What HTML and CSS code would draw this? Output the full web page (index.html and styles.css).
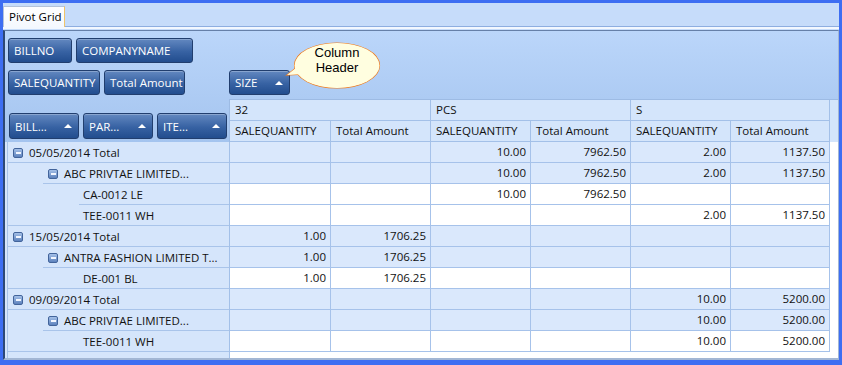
FILE: index.html
```html
<!DOCTYPE html>
<html lang="en">
<head>
  <meta charset="UTF-8">
  <title>Pivot Grid</title>
  <link rel="stylesheet" href="styles.css">
</head>
<body>
  <div class="window">
    <div class="tabstrip">
      <div class="tab">Pivot Grid</div>
    </div>
    <div class="tabgap"></div>

    <div class="panel">
      <div class="upper">
        <!-- filter + data/column field area -->
        <div class="fields">
          <div class="field-row">
            <span class="field w-billno">BILLNO</span>
            <span class="field w-company">COMPANYNAME</span>
          </div>
          <div class="field-row second">
            <div class="data-fields">
              <span class="field w-qty">SALEQUANTITY</span>
              <span class="field w-amount">Total Amount</span>
            </div>
            <div class="col-fields">
              <span class="field sort w-size">SIZE</span>
            </div>
          </div>

          <div class="callout">
            <svg width="102" height="56" viewBox="0 0 102 56">
              <ellipse cx="54" cy="27.5" rx="42.5" ry="22.5" fill="#fffee0" stroke="#f07a1a" stroke-width="1.2"/>
              <polygon points="18,26 4,37 22,36" fill="#fffee0" stroke="#f07a1a" stroke-width="1.2"/>
              <ellipse cx="54" cy="27.5" rx="42.5" ry="22.5" fill="#fffee0"/>
              <polygon points="18,26 4,37 22,36" fill="#fffee0"/>
            </svg>
            <div class="callout-text">Column<br>Header</div>
          </div>
        </div>

        <!-- row fields + column headers -->
        <div class="head">
          <div class="row-fields">
            <span class="field sort tall w-row">BILL...</span>
            <span class="field sort tall w-row">PAR...</span>
            <span class="field sort tall w-row">ITE...</span>
          </div>
          <div class="col-head">
            <div class="ch-row">
              <div class="ch c-span1">32</div>
              <div class="ch c-span">PCS</div>
              <div class="ch c-span3">S</div>
              <div class="ch-fill"></div>
            </div>
            <div class="ch-row">
              <div class="ch c1">SALEQUANTITY</div>
              <div class="ch c">Total Amount</div>
              <div class="ch c">SALEQUANTITY</div>
              <div class="ch c">Total Amount</div>
              <div class="ch c">SALEQUANTITY</div>
              <div class="ch c6">Total Amount</div>
              <div class="ch-fill"></div>
            </div>
          </div>
        </div>
      </div>

      <div class="grid-body">
        <div class="row total">
          <div class="rh lv1"><span class="exp"></span>05/05/2014 Total</div>
          <div class="cell c1"></div><div class="cell c"></div>
          <div class="cell c">10.00</div><div class="cell c">7962.50</div>
          <div class="cell c">2.00</div><div class="cell c6">1137.50</div>
          <div class="fill"></div>
        </div>
        <div class="row total">
          <div class="rh lv2"><span class="exp"></span>ABC PRIVTAE LIMITED...</div>
          <div class="cell c1"></div><div class="cell c"></div>
          <div class="cell c">10.00</div><div class="cell c">7962.50</div>
          <div class="cell c">2.00</div><div class="cell c6">1137.50</div>
          <div class="fill"></div>
        </div>
        <div class="row">
          <div class="rh lv3">CA-0012 LE</div>
          <div class="cell c1"></div><div class="cell c"></div>
          <div class="cell c">10.00</div><div class="cell c">7962.50</div>
          <div class="cell c"></div><div class="cell c6"></div>
          <div class="fill"></div>
        </div>
        <div class="row">
          <div class="rh lv3 end">TEE-0011 WH</div>
          <div class="cell c1"></div><div class="cell c"></div>
          <div class="cell c"></div><div class="cell c"></div>
          <div class="cell c">2.00</div><div class="cell c6">1137.50</div>
          <div class="fill"></div>
        </div>

        <div class="row total">
          <div class="rh lv1"><span class="exp"></span>15/05/2014 Total</div>
          <div class="cell c1">1.00</div><div class="cell c">1706.25</div>
          <div class="cell c"></div><div class="cell c"></div>
          <div class="cell c"></div><div class="cell c6"></div>
          <div class="fill"></div>
        </div>
        <div class="row total">
          <div class="rh lv2"><span class="exp"></span>ANTRA FASHION LIMITED T...</div>
          <div class="cell c1">1.00</div><div class="cell c">1706.25</div>
          <div class="cell c"></div><div class="cell c"></div>
          <div class="cell c"></div><div class="cell c6"></div>
          <div class="fill"></div>
        </div>
        <div class="row">
          <div class="rh lv3 end">DE-001 BL</div>
          <div class="cell c1">1.00</div><div class="cell c">1706.25</div>
          <div class="cell c"></div><div class="cell c"></div>
          <div class="cell c"></div><div class="cell c6"></div>
          <div class="fill"></div>
        </div>

        <div class="row total">
          <div class="rh lv1"><span class="exp"></span>09/09/2014 Total</div>
          <div class="cell c1"></div><div class="cell c"></div>
          <div class="cell c"></div><div class="cell c"></div>
          <div class="cell c">10.00</div><div class="cell c6">5200.00</div>
          <div class="fill"></div>
        </div>
        <div class="row total">
          <div class="rh lv2"><span class="exp"></span>ABC PRIVTAE LIMITED...</div>
          <div class="cell c1"></div><div class="cell c"></div>
          <div class="cell c"></div><div class="cell c"></div>
          <div class="cell c">10.00</div><div class="cell c6">5200.00</div>
          <div class="fill"></div>
        </div>
        <div class="row">
          <div class="rh lv3 end">TEE-0011 WH</div>
          <div class="cell c1"></div><div class="cell c"></div>
          <div class="cell c"></div><div class="cell c"></div>
          <div class="cell c">10.00</div><div class="cell c6">5200.00</div>
          <div class="fill"></div>
        </div>

        <div class="row-rest">
          <div class="rh-rest"></div>
          <div class="fill"></div>
        </div>
      </div>
    </div>
  </div>
</body>
</html>
```

FILE: styles.css
```css
body {
  margin: 0;
  height: 365px;
  padding: 3px 3px 5px 3px;
  box-sizing: border-box;
  background-color: #3d6ef2;
  font-family: "Open Sans", "Noto Sans", sans-serif;
  font-size: 11.5px;
  color: #111;
  overflow: hidden;
}
.window {
  height: 100%;
  background-color: #c6dcfa;
  display: flex;
  flex-direction: column;
}
.tabstrip {
  height: 23px;
  border-bottom: 1px solid #8eaee0;
  display: flex;
  align-items: flex-end;
}
.tab {
  width: 62px;
  height: 21px;
  box-sizing: border-box;
  margin-bottom: -1px;
  padding: 1px 0 0 5px;
  line-height: 18px;
  background: linear-gradient(#ffffff, #f4f8fe);
  border: 1px solid #b4c3da;
  border-right-color: #f0c46a;
  border-bottom: none;
  color: #000;
}
.tabgap {
  height: 2px;
  margin-bottom: 1px;
  background-color: #f3f8ff;
}
.panel {
  flex: 1;
  display: flex;
  flex-direction: column;
  border-left: 2px solid #2d4876;
  border-top: 1px solid #6680a8;
  border-right: 1px solid #a2b6d4;
  border-bottom: 2px solid #a2b6d4;
  min-height: 0;
}
.upper {
  background: linear-gradient(#bbd6fa, #a4c4ef);
}
.fields {
  height: 68px;
  box-sizing: border-box;
  padding: 7px 0 0 3px;
  position: relative;
}
.field-row {
  display: flex;
  gap: 4px;
  height: 25px;
}
.field-row.second {
  margin-top: 7px;
  gap: 0;
}
.data-fields {
  width: 221px;
  display: flex;
  gap: 4px;
}
.col-fields {
  display: flex;
  gap: 4px;
}
.field {
  box-sizing: border-box;
  height: 25px;
  display: flex;
  align-items: center;
  padding-left: 5px;
  border: 1px solid #213e6e;
  border-radius: 3px;
  background: linear-gradient(#6388c0, #3762a3 55%, #224d8e);
  box-shadow: inset 0 1px 0 rgba(255, 255, 255, 0.25);
  color: #fff;
  white-space: nowrap;
}
.field.tall {
  height: 26px;
}
.sort::after {
  content: "";
  margin-left: auto;
  margin-right: 6px;
  border-left: 4px solid transparent;
  border-right: 4px solid transparent;
  border-bottom: 4px solid #fff;
}
.w-billno { width: 64px; }
.w-company { width: 117px; }
.w-qty { width: 92px; }
.w-amount { width: 81px; }
.w-size { width: 61px; }
.w-row { width: 70px; }

/* callout balloon over the field area */
.callout {
  position: absolute;
  left: 278px;
  top: 7px;
  width: 102px;
  height: 56px;
}
.callout svg {
  display: block;
}
.callout-text {
  position: absolute;
  left: 12px;
  top: 7px;
  width: 84px;
  text-align: center;
  font-family: "Liberation Sans", Arial, sans-serif;
  font-size: 13px;
  line-height: 15px;
  color: #000;
}

.head {
  display: flex;
  height: 43px;
}
.row-fields {
  width: 224px;
  box-sizing: border-box;
  display: flex;
  align-items: flex-end;
  gap: 4px;
  padding: 0 0 3px 4px;
}
.col-head {
  flex: 1;
  border-left: 1px solid #9dbbe4;
  border-top: 1px solid #9dbbe4;
}
.ch-row {
  display: flex;
  height: 21px;
}
.ch {
  box-sizing: border-box;
  height: 21px;
  line-height: 20px;
  padding-left: 5px;
  background-color: #d4e5fb;
  border-right: 1px solid #a3c0e8;
  border-bottom: 1px solid #a3c0e8;
  white-space: nowrap;
  overflow: hidden;
}
.ch-fill {
  flex: 1;
  background-color: #d4e5fb;
}
.c-span1 { width: 201px; }
.c-span { width: 200px; }
.c-span3 { width: 199px; }
.c1 { width: 101px; }
.c { width: 100px; }
.c6 { width: 99px; }

.grid-body {
  flex: 1;
  display: flex;
  flex-direction: column;
  padding-left: 2px;
  background-color: #d5e5fb;
}
.row {
  display: flex;
  height: 21px;
}
.rh {
  width: 223px;
  box-sizing: border-box;
  display: flex;
  align-items: center;
  border-left: 1px solid #a9c3e8;
  border-right: 1px solid #a3c0e8;
  background: linear-gradient(#a9c4ea, #a9c4ea) no-repeat right bottom / 100% 1px, #d5e5fb;
  white-space: nowrap;
  color: #111;
}
.lv1 { padding-left: 5px; }
.lv2 {
  padding-left: 40px;
  background-size: calc(100% - 35px) 1px, auto;
}
.lv3 {
  padding-left: 75px;
  background-size: calc(100% - 71px) 1px, auto;
}
.lv3.end {
  background-size: 100% 1px, auto;
}
.exp {
  width: 10px;
  height: 10px;
  box-sizing: border-box;
  margin-right: 6px;
  display: flex;
  align-items: center;
  justify-content: center;
  border: 1px solid #42649b;
  border-radius: 2px;
  background: linear-gradient(#a4c0e8, #5d82bd);
}
.exp::after {
  content: "";
  width: 5px;
  height: 2px;
  background-color: #f2f6ff;
}
.cell {
  box-sizing: border-box;
  height: 21px;
  line-height: 20px;
  padding-right: 4px;
  text-align: right;
  background-color: #fff;
  border-right: 1px solid #a6c2ea;
  border-bottom: 1px solid #a6c2ea;
}
.total .cell {
  background-color: #dae8fc;
}
.fill {
  flex: 1;
  background-color: #fff;
}
.row-rest {
  flex: 1;
  display: flex;
}
.rh-rest {
  width: 223px;
  box-sizing: border-box;
  border-left: 1px solid #a9c3e8;
  border-right: 1px solid #a3c0e8;
}
```
